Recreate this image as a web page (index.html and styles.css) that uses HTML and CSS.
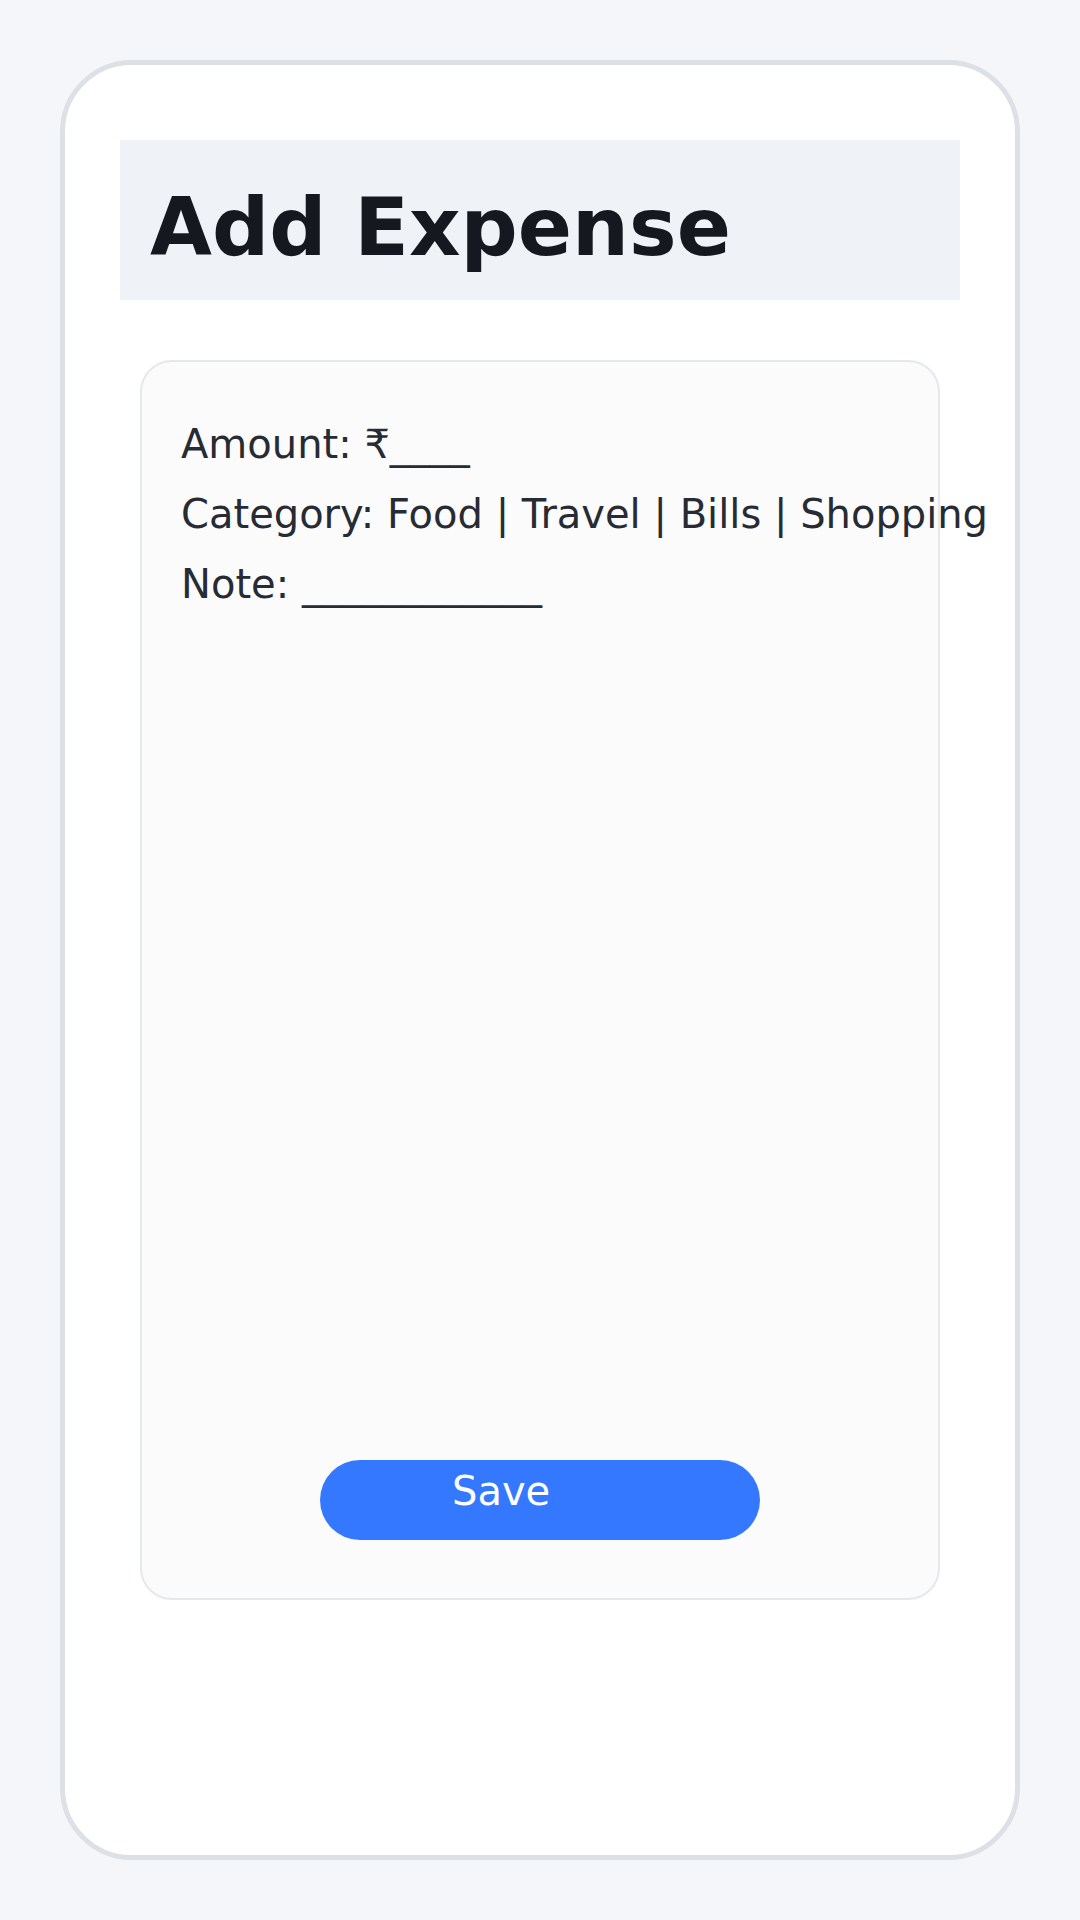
FILE: index.html
```html
<!DOCTYPE html>
<html lang="en">
<head>
<meta charset="utf-8">
<title>Add Expense</title>
<link rel="stylesheet" href="styles.css">
</head>
<body>
<div class="phone">
  <header class="appbar">
    <h1 class="title">Add Expense</h1>
  </header>
  <section class="card">
    <div class="field">Amount: ₹____</div>
    <div class="field">Category: Food | Travel | Bills | Shopping</div>
    <div class="field">Note: ____________</div>
    <button class="save" type="button">Save</button>
  </section>
</div>
</body>
</html>
```
FILE: styles.css
```css
* { box-sizing: border-box; }
html, body {
  margin: 0;
  padding: 0;
  background: #f5f6fa;
  font-family: "DejaVu Sans", "Noto Sans", sans-serif;
}
body {
  width: 1080px;
  height: 1920px;
  padding: 60px;
}
.phone {
  width: 960px;
  height: 1800px;
  border: 5px solid #dde1e6;
  border-radius: 72px;
  background: #ffffff;
  padding: 75px 55px;
  display: flex;
  flex-direction: column;
}
.appbar {
  height: 160px;
  background: #eff2f7;
  padding: 48px 30px 0;
}
.title {
  margin: 0;
  font-size: 80px;
  line-height: 80px;
  font-weight: 700;
  color: #15181e;
  white-space: nowrap;
}
.card {
  margin: 60px 20px 0;
  height: 1240px;
  background: #fbfbfc;
  border: 2px solid #e5e8ec;
  border-radius: 32px;
  padding: 47px 0 58px 39px;
  display: flex;
  flex-direction: column;
  align-items: flex-start;
}
.field {
  font-size: 40px;
  line-height: 70px;
  color: #272b33;
  white-space: nowrap;
}
.save {
  margin-top: auto;
  align-self: center;
  margin-left: -39px;
  width: 440px;
  height: 80px;
  border: 0;
  border-radius: 40px;
  background: #3478ff;
  color: #ffffff;
  font-family: "DejaVu Sans", "Noto Sans", sans-serif;
  font-size: 40px;
  line-height: 46px;
  padding: 0 0 18px 132px;
  text-align: left;
  display: block;
}
```
